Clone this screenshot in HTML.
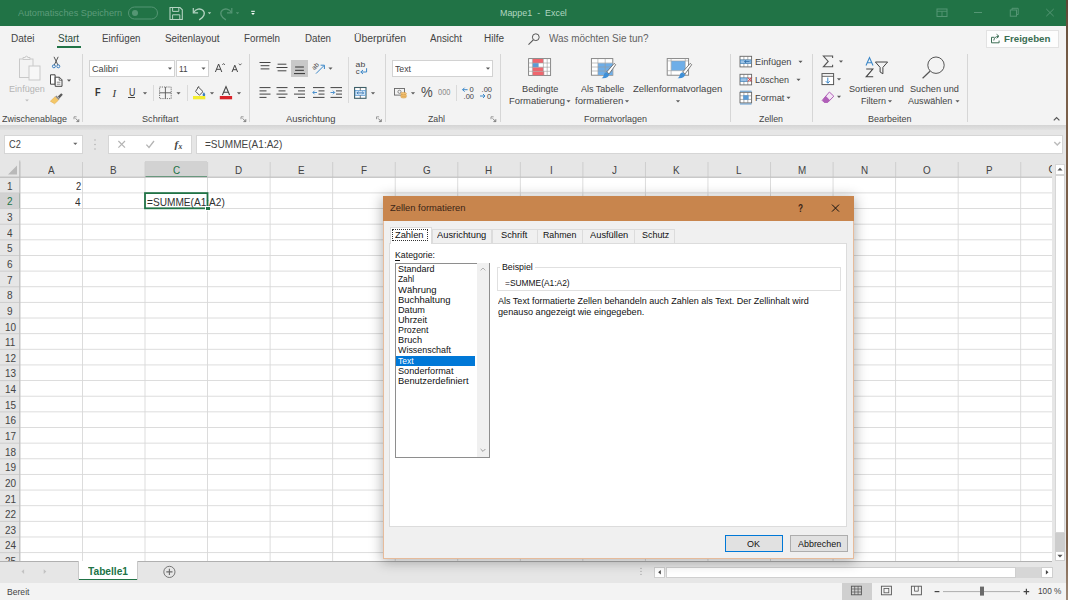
<!DOCTYPE html>
<html lang="de"><head><meta charset="utf-8"><title>Mappe1 - Excel</title>
<style>
html,body{margin:0;padding:0;}
body{width:1068px;height:600px;overflow:hidden;position:relative;background:#f3f3f3;font-family:"Liberation Sans",sans-serif;}
.r{position:absolute;}
.t{position:absolute;white-space:pre;transform-origin:0 50%;display:block;}
svg{position:absolute;left:0;top:0;overflow:visible;}
</style></head><body>
<div class="r " style="left:0.00px;top:0.00px;width:1068.00px;height:26.00px;background:#217346;"></div>
<span class="t" style="left:18.00px;top:7.17px;font-size:9.4px;line-height:11.28px;color:#5c9b7a;transform:scaleX(0.9804);">Automatisches Speichern</span>
<span class="t" style="left:499.50px;top:7.07px;font-size:9.4px;line-height:11.28px;color:#b0d6c0;transform:scaleX(0.9499);">Mappe1  -  Excel</span>
<div class="r " style="left:0.00px;top:26.00px;width:1068.00px;height:99.00px;background:#f3f3f3;"></div>
<span class="t" style="left:11.00px;top:32.60px;font-size:10px;line-height:12.00px;color:#444444;transform:scaleX(1.0066);">Datei</span>
<span class="t" style="left:58.00px;top:32.60px;font-size:10px;line-height:12.00px;color:#2b4b3a;transform:scaleX(0.9944);">Start</span>
<div class="r " style="left:57.00px;top:46.00px;width:23.50px;height:2.00px;background:#217346;"></div>
<span class="t" style="left:101.50px;top:32.60px;font-size:10px;line-height:12.00px;color:#444444;transform:scaleX(0.9752);">Einfügen</span>
<span class="t" style="left:165.00px;top:32.60px;font-size:10px;line-height:12.00px;color:#444444;transform:scaleX(0.9902);">Seitenlayout</span>
<span class="t" style="left:244.00px;top:32.60px;font-size:10px;line-height:12.00px;color:#444444;transform:scaleX(0.9816);">Formeln</span>
<span class="t" style="left:304.50px;top:32.60px;font-size:10px;line-height:12.00px;color:#444444;transform:scaleX(0.9743);">Daten</span>
<span class="t" style="left:353.50px;top:32.60px;font-size:10px;line-height:12.00px;color:#444444;transform:scaleX(1.0394);">Überprüfen</span>
<span class="t" style="left:429.50px;top:32.60px;font-size:10px;line-height:12.00px;color:#444444;transform:scaleX(0.9758);">Ansicht</span>
<span class="t" style="left:484.00px;top:32.60px;font-size:10px;line-height:12.00px;color:#444444;transform:scaleX(0.9997);">Hilfe</span>
<span class="t" style="left:548.50px;top:32.60px;font-size:10px;line-height:12.00px;color:#626262;transform:scaleX(0.9927);">Was möchten Sie tun?</span>
<div class="r " style="left:985.50px;top:30.00px;width:73.00px;height:17.50px;background:#fdfdfd;border:1px solid #e2e2e2;box-sizing:border-box;"></div>
<span class="t" style="left:1004.00px;top:32.95px;font-size:9.6px;line-height:11.52px;color:#3a6e52;transform:scaleX(1.0136);font-weight:bold;">Freigeben</span>
<div class="r " style="left:82.00px;top:53.50px;width:1.00px;height:68.50px;background:#d6d6d6;"></div>
<div class="r " style="left:249.00px;top:53.50px;width:1.00px;height:68.50px;background:#d6d6d6;"></div>
<div class="r " style="left:384.50px;top:53.50px;width:1.00px;height:68.50px;background:#d6d6d6;"></div>
<div class="r " style="left:499.50px;top:53.50px;width:1.00px;height:68.50px;background:#d6d6d6;"></div>
<div class="r " style="left:730.00px;top:53.50px;width:1.00px;height:68.50px;background:#d6d6d6;"></div>
<div class="r " style="left:812.00px;top:53.50px;width:1.00px;height:68.50px;background:#d6d6d6;"></div>
<div class="r " style="left:967.00px;top:53.50px;width:1.00px;height:68.50px;background:#d6d6d6;"></div>
<div class="r " style="left:348.00px;top:57.00px;width:1.00px;height:46.00px;background:#dadada;"></div>
<div class="r " style="left:153.00px;top:85.00px;width:1.00px;height:16.00px;background:#dadada;"></div>
<div class="r " style="left:187.00px;top:85.00px;width:1.00px;height:16.00px;background:#dadada;"></div>
<div class="r " style="left:456.00px;top:85.00px;width:1.00px;height:16.00px;background:#dadada;"></div>
<span class="t" style="left:2.00px;top:113.60px;font-size:9.2px;line-height:11.04px;color:#444444;transform:scaleX(0.9776);">Zwischenablage</span>
<span class="t" style="left:141.50px;top:113.60px;font-size:9.2px;line-height:11.04px;color:#444444;transform:scaleX(0.9916);">Schriftart</span>
<span class="t" style="left:286.00px;top:113.60px;font-size:9.2px;line-height:11.04px;color:#444444;transform:scaleX(1.0188);">Ausrichtung</span>
<span class="t" style="left:427.50px;top:113.60px;font-size:9.2px;line-height:11.04px;color:#444444;transform:scaleX(0.9498);">Zahl</span>
<span class="t" style="left:583.50px;top:113.60px;font-size:9.2px;line-height:11.04px;color:#444444;transform:scaleX(0.9778);">Formatvorlagen</span>
<span class="t" style="left:759.00px;top:113.60px;font-size:9.2px;line-height:11.04px;color:#444444;transform:scaleX(0.9578);">Zellen</span>
<span class="t" style="left:868.00px;top:113.60px;font-size:9.2px;line-height:11.04px;color:#444444;transform:scaleX(0.9775);">Bearbeiten</span>
<span class="t" style="left:9.00px;top:82.67px;font-size:9.4px;line-height:11.28px;color:#b5b5b5;transform:scaleX(0.9701);">Einfügen</span>
<div class="r " style="left:89.30px;top:59.50px;width:86.10px;height:17.50px;background:#fff;border:1px solid #d2d2d2;box-sizing:border-box;"></div>
<div class="r " style="left:176.20px;top:59.50px;width:33.00px;height:17.50px;background:#fff;border:1px solid #d2d2d2;box-sizing:border-box;"></div>
<span class="t" style="left:92.00px;top:62.67px;font-size:9.4px;line-height:11.28px;color:#444444;transform:scaleX(0.9759);">Calibri</span>
<span class="t" style="left:179.00px;top:62.67px;font-size:9.4px;line-height:11.28px;color:#444444;transform:scaleX(0.8813);">11</span>
<span class="t" style="left:94.80px;top:87.25px;font-size:10.4px;line-height:12.48px;color:#333;transform:scaleX(0.8815);font-weight:bold;">F</span>
<span class="t" style="left:112.6px;top:87px;font-size:10.8px;line-height:13px;color:#333;font-family:'Liberation Serif',serif;font-style:italic;">I</span>
<span class="t" style="left:128.60px;top:87.30px;font-size:10px;line-height:12.00px;color:#333;transform:scaleX(0.8862);">U</span>
<div class="r " style="left:128.40px;top:97.30px;width:6.80px;height:0.90px;background:#444;"></div>
<div class="r " style="left:291.00px;top:59.50px;width:16.50px;height:17.50px;background:#c8c8c8;"></div>
<div class="r " style="left:392.20px;top:59.50px;width:101.30px;height:17.50px;background:#fff;border:1px solid #d2d2d2;box-sizing:border-box;"></div>
<span class="t" style="left:395.00px;top:62.67px;font-size:9.4px;line-height:11.28px;color:#444444;transform:scaleX(0.9281);">Text</span>
<span class="t" style="left:420.90px;top:83.30px;font-size:15px;line-height:18.00px;color:#4a4a4a;transform:scaleX(0.8773);">%</span>
<span class="t" style="left:437.80px;top:88.32px;font-size:8.2px;line-height:9.84px;color:#8a8a8a;transform:scaleX(0.9063);">000</span>
<span class="t" style="left:521.50px;top:82.67px;font-size:9.4px;line-height:11.28px;color:#444444;transform:scaleX(0.9836);">Bedingte</span>
<span class="t" style="left:508.50px;top:95.17px;font-size:9.4px;line-height:11.28px;color:#444444;transform:scaleX(1.0018);">Formatierung</span>
<span class="t" style="left:580.50px;top:82.67px;font-size:9.4px;line-height:11.28px;color:#444444;transform:scaleX(0.9605);">Als Tabelle</span>
<span class="t" style="left:574.50px;top:95.17px;font-size:9.4px;line-height:11.28px;color:#444444;transform:scaleX(1.0201);">formatieren</span>
<span class="t" style="left:633.00px;top:82.67px;font-size:9.4px;line-height:11.28px;color:#444444;transform:scaleX(1.0136);">Zellenformatvorlagen</span>
<span class="t" style="left:754.50px;top:55.67px;font-size:9.4px;line-height:11.28px;color:#444444;transform:scaleX(0.9836);">Einfügen</span>
<span class="t" style="left:754.50px;top:73.67px;font-size:9.4px;line-height:11.28px;color:#444444;transform:scaleX(0.9567);">Löschen</span>
<span class="t" style="left:754.50px;top:91.67px;font-size:9.4px;line-height:11.28px;color:#444444;transform:scaleX(0.9909);">Format</span>
<span class="t" style="left:848.50px;top:82.67px;font-size:9.4px;line-height:11.28px;color:#444444;transform:scaleX(0.9745);">Sortieren und</span>
<span class="t" style="left:860.50px;top:95.17px;font-size:9.4px;line-height:11.28px;color:#444444;transform:scaleX(0.9572);">Filtern</span>
<span class="t" style="left:909.50px;top:82.67px;font-size:9.4px;line-height:11.28px;color:#444444;transform:scaleX(0.9765);">Suchen und</span>
<span class="t" style="left:908.00px;top:95.17px;font-size:9.4px;line-height:11.28px;color:#444444;transform:scaleX(0.9677);">Auswählen</span>
<div class="r " style="left:0.00px;top:125.00px;width:1068.00px;height:5.00px;background:linear-gradient(#d4d4d4,#e2e2e2);"></div>
<div class="r " style="left:0.00px;top:130.00px;width:1068.00px;height:30.50px;background:#e6e6e6;"></div>
<div class="r " style="left:4.30px;top:134.50px;width:79.10px;height:19.10px;background:#fff;border:1px solid #d6d6d6;box-sizing:border-box;"></div>
<span class="t" style="left:9.40px;top:139.15px;font-size:10.4px;line-height:12.48px;color:#444444;transform:scaleX(0.8876);">C2</span>
<div class="r " style="left:108.00px;top:134.50px;width:83.70px;height:19.10px;background:#fff;border:1px solid #d6d6d6;box-sizing:border-box;"></div>
<div class="r " style="left:196.00px;top:134.50px;width:867.00px;height:19.10px;background:#fff;border:1px solid #d6d6d6;box-sizing:border-box;"></div>
<span class="t" style="left:205.00px;top:139.08px;font-size:10.2px;line-height:12.24px;color:#444444;transform:scaleX(0.9859);">=SUMME(A1:A2)</span>
<div class="r " style="left:0.00px;top:160.50px;width:1068.00px;height:400.50px;background:#fff;"></div>
<div class="r " style="left:0.00px;top:160.50px;width:1052.00px;height:16.70px;background:#e6e6e6;"></div>
<div class="r " style="left:0.00px;top:160.50px;width:19.85px;height:400.50px;background:#e6e6e6;"></div>
<div class="r " style="left:144.95px;top:160.50px;width:62.55px;height:16.70px;background:#d2d2d2;"></div>
<div class="r " style="left:144.95px;top:176.00px;width:62.55px;height:1.20px;background:#217346;"></div>
<div class="r " style="left:0.00px;top:192.84px;width:19.85px;height:15.64px;background:#d2d2d2;"></div>
<div class="r " style="left:18.65px;top:192.84px;width:1.20px;height:15.64px;background:#217346;"></div>
<svg width="1068" height="600" viewBox="0 0 1068 600"><rect x="19.85" y="176.80" width="1032.15" height="0.9" fill="#d9d9d9"/><rect x="0" y="176.80" width="19.85" height="1" fill="#cecece"/><rect x="19.85" y="192.44" width="1032.15" height="0.9" fill="#d9d9d9"/><rect x="0" y="192.44" width="19.85" height="1" fill="#cecece"/><rect x="19.85" y="208.08" width="1032.15" height="0.9" fill="#d9d9d9"/><rect x="0" y="208.08" width="19.85" height="1" fill="#cecece"/><rect x="19.85" y="223.72" width="1032.15" height="0.9" fill="#d9d9d9"/><rect x="0" y="223.72" width="19.85" height="1" fill="#cecece"/><rect x="19.85" y="239.36" width="1032.15" height="0.9" fill="#d9d9d9"/><rect x="0" y="239.36" width="19.85" height="1" fill="#cecece"/><rect x="19.85" y="255.00" width="1032.15" height="0.9" fill="#d9d9d9"/><rect x="0" y="255.00" width="19.85" height="1" fill="#cecece"/><rect x="19.85" y="270.64" width="1032.15" height="0.9" fill="#d9d9d9"/><rect x="0" y="270.64" width="19.85" height="1" fill="#cecece"/><rect x="19.85" y="286.28" width="1032.15" height="0.9" fill="#d9d9d9"/><rect x="0" y="286.28" width="19.85" height="1" fill="#cecece"/><rect x="19.85" y="301.92" width="1032.15" height="0.9" fill="#d9d9d9"/><rect x="0" y="301.92" width="19.85" height="1" fill="#cecece"/><rect x="19.85" y="317.56" width="1032.15" height="0.9" fill="#d9d9d9"/><rect x="0" y="317.56" width="19.85" height="1" fill="#cecece"/><rect x="19.85" y="333.20" width="1032.15" height="0.9" fill="#d9d9d9"/><rect x="0" y="333.20" width="19.85" height="1" fill="#cecece"/><rect x="19.85" y="348.84" width="1032.15" height="0.9" fill="#d9d9d9"/><rect x="0" y="348.84" width="19.85" height="1" fill="#cecece"/><rect x="19.85" y="364.48" width="1032.15" height="0.9" fill="#d9d9d9"/><rect x="0" y="364.48" width="19.85" height="1" fill="#cecece"/><rect x="19.85" y="380.12" width="1032.15" height="0.9" fill="#d9d9d9"/><rect x="0" y="380.12" width="19.85" height="1" fill="#cecece"/><rect x="19.85" y="395.76" width="1032.15" height="0.9" fill="#d9d9d9"/><rect x="0" y="395.76" width="19.85" height="1" fill="#cecece"/><rect x="19.85" y="411.40" width="1032.15" height="0.9" fill="#d9d9d9"/><rect x="0" y="411.40" width="19.85" height="1" fill="#cecece"/><rect x="19.85" y="427.04" width="1032.15" height="0.9" fill="#d9d9d9"/><rect x="0" y="427.04" width="19.85" height="1" fill="#cecece"/><rect x="19.85" y="442.68" width="1032.15" height="0.9" fill="#d9d9d9"/><rect x="0" y="442.68" width="19.85" height="1" fill="#cecece"/><rect x="19.85" y="458.32" width="1032.15" height="0.9" fill="#d9d9d9"/><rect x="0" y="458.32" width="19.85" height="1" fill="#cecece"/><rect x="19.85" y="473.96" width="1032.15" height="0.9" fill="#d9d9d9"/><rect x="0" y="473.96" width="19.85" height="1" fill="#cecece"/><rect x="19.85" y="489.60" width="1032.15" height="0.9" fill="#d9d9d9"/><rect x="0" y="489.60" width="19.85" height="1" fill="#cecece"/><rect x="19.85" y="505.24" width="1032.15" height="0.9" fill="#d9d9d9"/><rect x="0" y="505.24" width="19.85" height="1" fill="#cecece"/><rect x="19.85" y="520.88" width="1032.15" height="0.9" fill="#d9d9d9"/><rect x="0" y="520.88" width="19.85" height="1" fill="#cecece"/><rect x="19.85" y="536.52" width="1032.15" height="0.9" fill="#d9d9d9"/><rect x="0" y="536.52" width="19.85" height="1" fill="#cecece"/><rect x="19.85" y="552.16" width="1032.15" height="0.9" fill="#d9d9d9"/><rect x="0" y="552.16" width="19.85" height="1" fill="#cecece"/><rect x="19.45" y="177.2" width="0.9" height="383.8" fill="#d9d9d9"/><rect x="19.45" y="162" width="1" height="15.199999999999989" fill="#cecece"/><rect x="82.00" y="177.2" width="0.9" height="383.8" fill="#d9d9d9"/><rect x="82.00" y="162" width="1" height="15.199999999999989" fill="#cecece"/><rect x="144.55" y="177.2" width="0.9" height="383.8" fill="#d9d9d9"/><rect x="144.55" y="162" width="1" height="15.199999999999989" fill="#cecece"/><rect x="207.10" y="177.2" width="0.9" height="383.8" fill="#d9d9d9"/><rect x="207.10" y="162" width="1" height="15.199999999999989" fill="#cecece"/><rect x="269.65" y="177.2" width="0.9" height="383.8" fill="#d9d9d9"/><rect x="269.65" y="162" width="1" height="15.199999999999989" fill="#cecece"/><rect x="332.20" y="177.2" width="0.9" height="383.8" fill="#d9d9d9"/><rect x="332.20" y="162" width="1" height="15.199999999999989" fill="#cecece"/><rect x="394.75" y="177.2" width="0.9" height="383.8" fill="#d9d9d9"/><rect x="394.75" y="162" width="1" height="15.199999999999989" fill="#cecece"/><rect x="457.30" y="177.2" width="0.9" height="383.8" fill="#d9d9d9"/><rect x="457.30" y="162" width="1" height="15.199999999999989" fill="#cecece"/><rect x="519.85" y="177.2" width="0.9" height="383.8" fill="#d9d9d9"/><rect x="519.85" y="162" width="1" height="15.199999999999989" fill="#cecece"/><rect x="582.40" y="177.2" width="0.9" height="383.8" fill="#d9d9d9"/><rect x="582.40" y="162" width="1" height="15.199999999999989" fill="#cecece"/><rect x="644.95" y="177.2" width="0.9" height="383.8" fill="#d9d9d9"/><rect x="644.95" y="162" width="1" height="15.199999999999989" fill="#cecece"/><rect x="707.50" y="177.2" width="0.9" height="383.8" fill="#d9d9d9"/><rect x="707.50" y="162" width="1" height="15.199999999999989" fill="#cecece"/><rect x="770.05" y="177.2" width="0.9" height="383.8" fill="#d9d9d9"/><rect x="770.05" y="162" width="1" height="15.199999999999989" fill="#cecece"/><rect x="832.60" y="177.2" width="0.9" height="383.8" fill="#d9d9d9"/><rect x="832.60" y="162" width="1" height="15.199999999999989" fill="#cecece"/><rect x="895.15" y="177.2" width="0.9" height="383.8" fill="#d9d9d9"/><rect x="895.15" y="162" width="1" height="15.199999999999989" fill="#cecece"/><rect x="957.70" y="177.2" width="0.9" height="383.8" fill="#d9d9d9"/><rect x="957.70" y="162" width="1" height="15.199999999999989" fill="#cecece"/><rect x="1020.25" y="177.2" width="0.9" height="383.8" fill="#d9d9d9"/><rect x="1020.25" y="162" width="1" height="15.199999999999989" fill="#cecece"/><rect x="0" y="176.7" width="1052" height="0.9" fill="#b8b8b8"/><rect x="19.35" y="160.5" width="0.9" height="400.5" fill="#b8b8b8"/></svg>
<span class="t" style="left:47.83px;top:164.55px;font-size:10.4px;line-height:12.48px;color:#444444;transform:scaleX(0.9500);">A</span>
<span class="t" style="left:110.38px;top:164.55px;font-size:10.4px;line-height:12.48px;color:#444444;transform:scaleX(0.9500);">B</span>
<span class="t" style="left:172.66px;top:164.55px;font-size:10.4px;line-height:12.48px;color:#217346;transform:scaleX(0.9500);">C</span>
<span class="t" style="left:235.21px;top:164.55px;font-size:10.4px;line-height:12.48px;color:#444444;transform:scaleX(0.9500);">D</span>
<span class="t" style="left:298.03px;top:164.55px;font-size:10.4px;line-height:12.48px;color:#444444;transform:scaleX(0.9500);">E</span>
<span class="t" style="left:360.86px;top:164.55px;font-size:10.4px;line-height:12.48px;color:#444444;transform:scaleX(0.9500);">F</span>
<span class="t" style="left:422.58px;top:164.55px;font-size:10.4px;line-height:12.48px;color:#444444;transform:scaleX(0.9500);">G</span>
<span class="t" style="left:485.41px;top:164.55px;font-size:10.4px;line-height:12.48px;color:#444444;transform:scaleX(0.9500);">H</span>
<span class="t" style="left:550.15px;top:164.55px;font-size:10.4px;line-height:12.48px;color:#444444;transform:scaleX(0.9500);">I</span>
<span class="t" style="left:611.61px;top:164.55px;font-size:10.4px;line-height:12.48px;color:#444444;transform:scaleX(0.9500);">J</span>
<span class="t" style="left:673.33px;top:164.55px;font-size:10.4px;line-height:12.48px;color:#444444;transform:scaleX(0.9500);">K</span>
<span class="t" style="left:736.43px;top:164.55px;font-size:10.4px;line-height:12.48px;color:#444444;transform:scaleX(0.9500);">L</span>
<span class="t" style="left:797.61px;top:164.55px;font-size:10.4px;line-height:12.48px;color:#444444;transform:scaleX(0.9500);">M</span>
<span class="t" style="left:860.71px;top:164.55px;font-size:10.4px;line-height:12.48px;color:#444444;transform:scaleX(0.9500);">N</span>
<span class="t" style="left:922.98px;top:164.55px;font-size:10.4px;line-height:12.48px;color:#444444;transform:scaleX(0.9500);">O</span>
<span class="t" style="left:986.08px;top:164.55px;font-size:10.4px;line-height:12.48px;color:#444444;transform:scaleX(0.9500);">P</span>
<div class="r" style="left:1040px;top:161px;width:12px;height:16px;overflow:hidden"><span class="t" style="left:8.6px;top:3px;font-size:10.4px;line-height:12.5px;color:#444">Q</span></div>
<span class="t" style="left:7.43px;top:179.75px;font-size:10.6px;line-height:12.72px;color:#444444;transform:scaleX(0.9400);">1</span>
<span class="t" style="left:7.43px;top:195.39px;font-size:10.6px;line-height:12.72px;color:#217346;transform:scaleX(0.9400);">2</span>
<span class="t" style="left:7.43px;top:211.03px;font-size:10.6px;line-height:12.72px;color:#444444;transform:scaleX(0.9400);">3</span>
<span class="t" style="left:7.43px;top:226.67px;font-size:10.6px;line-height:12.72px;color:#444444;transform:scaleX(0.9400);">4</span>
<span class="t" style="left:7.43px;top:242.31px;font-size:10.6px;line-height:12.72px;color:#444444;transform:scaleX(0.9400);">5</span>
<span class="t" style="left:7.43px;top:257.95px;font-size:10.6px;line-height:12.72px;color:#444444;transform:scaleX(0.9400);">6</span>
<span class="t" style="left:7.43px;top:273.59px;font-size:10.6px;line-height:12.72px;color:#444444;transform:scaleX(0.9400);">7</span>
<span class="t" style="left:7.43px;top:289.23px;font-size:10.6px;line-height:12.72px;color:#444444;transform:scaleX(0.9400);">8</span>
<span class="t" style="left:7.43px;top:304.87px;font-size:10.6px;line-height:12.72px;color:#444444;transform:scaleX(0.9400);">9</span>
<span class="t" style="left:4.66px;top:320.51px;font-size:10.6px;line-height:12.72px;color:#444444;transform:scaleX(0.9400);">10</span>
<span class="t" style="left:5.03px;top:336.15px;font-size:10.6px;line-height:12.72px;color:#444444;transform:scaleX(0.9400);">11</span>
<span class="t" style="left:4.66px;top:351.79px;font-size:10.6px;line-height:12.72px;color:#444444;transform:scaleX(0.9400);">12</span>
<span class="t" style="left:4.66px;top:367.43px;font-size:10.6px;line-height:12.72px;color:#444444;transform:scaleX(0.9400);">13</span>
<span class="t" style="left:4.66px;top:383.07px;font-size:10.6px;line-height:12.72px;color:#444444;transform:scaleX(0.9400);">14</span>
<span class="t" style="left:4.66px;top:398.71px;font-size:10.6px;line-height:12.72px;color:#444444;transform:scaleX(0.9400);">15</span>
<span class="t" style="left:4.66px;top:414.35px;font-size:10.6px;line-height:12.72px;color:#444444;transform:scaleX(0.9400);">16</span>
<span class="t" style="left:4.66px;top:429.99px;font-size:10.6px;line-height:12.72px;color:#444444;transform:scaleX(0.9400);">17</span>
<span class="t" style="left:4.66px;top:445.63px;font-size:10.6px;line-height:12.72px;color:#444444;transform:scaleX(0.9400);">18</span>
<span class="t" style="left:4.66px;top:461.27px;font-size:10.6px;line-height:12.72px;color:#444444;transform:scaleX(0.9400);">19</span>
<span class="t" style="left:4.66px;top:476.91px;font-size:10.6px;line-height:12.72px;color:#444444;transform:scaleX(0.9400);">20</span>
<span class="t" style="left:4.66px;top:492.55px;font-size:10.6px;line-height:12.72px;color:#444444;transform:scaleX(0.9400);">21</span>
<span class="t" style="left:4.66px;top:508.19px;font-size:10.6px;line-height:12.72px;color:#444444;transform:scaleX(0.9400);">22</span>
<span class="t" style="left:4.66px;top:523.83px;font-size:10.6px;line-height:12.72px;color:#444444;transform:scaleX(0.9400);">23</span>
<span class="t" style="left:4.66px;top:539.47px;font-size:10.6px;line-height:12.72px;color:#444444;transform:scaleX(0.9400);">24</span>
<span class="t" style="left:4.66px;top:555.11px;font-size:10.6px;line-height:12.72px;color:#444444;transform:scaleX(0.9400);">25</span>
<span class="t" style="left:75.50px;top:180.03px;font-size:10.6px;line-height:12.72px;color:#303030;transform:scaleX(0.8820);">2</span>
<span class="t" style="left:75.30px;top:195.63px;font-size:10.6px;line-height:12.72px;color:#303030;transform:scaleX(0.9499);">4</span>
<span class="t" style="left:146.80px;top:195.53px;font-size:10.6px;line-height:12.72px;color:#303030;transform:scaleX(0.9548);">=SUMME(A1:A2)</span>
<svg width="1068" height="600" viewBox="0 0 1068 600" fill="none"><rect x="145" y="193.1" width="62.5" height="15.2" stroke="#217346" stroke-width="1.8"/></svg>
<div class="r " style="left:205.30px;top:206.10px;width:4.70px;height:4.70px;background:#fff;"></div>
<div class="r " style="left:206.00px;top:206.80px;width:3.70px;height:3.70px;background:#217346;"></div>
<div class="r " style="left:1052.00px;top:160.50px;width:16.00px;height:400.50px;background:#e6e6e6;"></div>
<div class="r " style="left:1054.80px;top:163.60px;width:10.20px;height:11.60px;background:#fff;border:1px solid #d6d6d6;box-sizing:border-box;"></div>
<div class="r " style="left:1055.00px;top:175.20px;width:10.00px;height:357.80px;background:#fff;border:1px solid #d6d6d6;box-sizing:border-box;"></div>
<div class="r " style="left:1055.00px;top:533.00px;width:10.00px;height:18.00px;background:#cdcdcd;"></div>
<div class="r " style="left:1055.00px;top:551.00px;width:10.00px;height:10.00px;background:#fff;border:1px solid #cfcfcf;box-sizing:border-box;"></div>
<div class="r " style="left:0.00px;top:561.00px;width:1068.00px;height:22.00px;background:#e6e6e6;"></div>
<div class="r " style="left:0.00px;top:560.50px;width:1052.00px;height:1.00px;background:#b0b0b0;"></div>
<div class="r " style="left:78.20px;top:561.00px;width:59.80px;height:19.00px;background:#fff;border-left:1px solid #c9c9c9;border-right:1px solid #c9c9c9;box-sizing:border-box;"></div>
<div class="r " style="left:78.70px;top:578.60px;width:58.80px;height:1.60px;background:#217346;"></div>
<span class="t" style="left:88.00px;top:565.50px;font-size:10px;line-height:12.00px;color:#217346;transform:scaleX(1.0184);font-weight:bold;">Tabelle1</span>
<div class="r " style="left:0.00px;top:583.00px;width:1068.00px;height:17.00px;background:#f3f3f3;"></div>
<span class="t" style="left:6.70px;top:585.57px;font-size:9.4px;line-height:11.28px;color:#444444;transform:scaleX(0.9162);">Bereit</span>
<span class="t" style="left:1038.40px;top:585.32px;font-size:9.8px;line-height:11.76px;color:#444444;transform:scaleX(0.8421);">100 %</span>
<div class="r " style="left:654.00px;top:566.50px;width:11.00px;height:11.50px;background:#fff;border:1px solid #cfcfcf;box-sizing:border-box;"></div>
<div class="r " style="left:666.00px;top:566.50px;width:350.00px;height:11.50px;background:#fff;border:1px solid #cfcfcf;box-sizing:border-box;"></div>
<div class="r " style="left:1016.00px;top:566.50px;width:25.30px;height:11.50px;background:#d6d6d6;"></div>
<div class="r " style="left:1041.30px;top:566.50px;width:11.70px;height:11.50px;background:#fff;border:1px solid #cfcfcf;box-sizing:border-box;"></div>
<div class="r " style="left:842.00px;top:583.00px;width:30.00px;height:17.00px;background:#cfcfcf;"></div>
<div class="r " style="left:1065.80px;top:0.00px;width:2.20px;height:600.00px;background:linear-gradient(#5b4634 0%,#6b523e 5%,#7a5f49 12%,#7a5f49 90%,#a08a78 100%);"></div>
<svg width="1068" height="600" viewBox="0 0 1068 600" fill="none" stroke-linecap="butt"><rect x="128.5" y="7" width="29" height="12" rx="6" stroke="#559674" stroke-width="1"/><circle cx="135" cy="13" r="3" fill="#559674"/><path d="M170 7.5h10l2.3 2.3v9.7h-12.3z" stroke="#b4d3c2" stroke-width="1.1"/><path d="M172.6 7.6v3.8h6.2v-3.8M172.6 19.4v-4.6h7.2v4.6" stroke="#b4d3c2" stroke-width="1"/><path d="M193.3 8v4.8h4.8" stroke="#b4d3c2" stroke-width="1.2"/><path d="M193.6 12.5c2.2-3.6 6.6-4.6 9.2-2.2c2.8 2.6 1.6 6.6-3.6 9.6" stroke="#b4d3c2" stroke-width="1.3"/><path d="M207.80 12.25h3.4l-1.70 1.9z" fill="#b4d3c2"/><path d="M231.8 8v4.8h-4.8" stroke="#559674" stroke-width="1.2"/><path d="M231.5 12.5c-2.2-3.6-6.6-4.6-9.2-2.2c-2.8 2.6-1.6 6.6 3.6 9.6" stroke="#559674" stroke-width="1.3"/><path d="M235.80 12.25h3.4l-1.70 1.9z" fill="#559674"/><path d="M251.2 11.3H254.8" stroke="#fff" stroke-width="1"/><path d="M251.20 12.90h3.6l-1.80 2z" fill="#fff"/><rect x="937" y="9" width="10" height="7.5" stroke="#559674" stroke-width="1"/><path d="M937 11.3h10M942 11.3v5" stroke="#559674" stroke-width="0.9"/><path d="M974 12.5H982" stroke="#559674" stroke-width="1"/><rect x="1010.3" y="10" width="6.2" height="6.2" stroke="#559674" stroke-width="1"/><path d="M1012 10v-1.7h6.2v6.2h-1.7" stroke="#559674" stroke-width="1"/><path d="M1046.3 9l7.4 7.2M1053.7 9l-7.4 7.2" stroke="#559674" stroke-width="1"/><circle cx="535.8" cy="37.2" r="3.4" stroke="#555" stroke-width="1"/><path d="M533.3 39.8l-4.8 4.8" stroke="#555" stroke-width="1.1"/><path d="M994.5 37.3h-3v5.5h7.6v-2.2" stroke="#3c6e55" stroke-width="1"/><path d="M993.8 40.5c0.3-2.6 2-4 4.3-4.2M996.6 34.3l2.4 2l-2.4 2" stroke="#3c6e55" stroke-width="1"/><rect x="19.5" y="59" width="13.5" height="18.5" stroke="#c9c9c9" fill="#f3f3f3"/><path d="M23 59.5v-2h2.2a1.3 1.3 0 0 1 2.6 0h2.2v2z" stroke="#c9c9c9" fill="#f3f3f3"/><rect x="29" y="66" width="11" height="14" stroke="#c9c9c9" fill="#f7f7f7"/><path d="M25.20 99.60h3.6l-1.80 2z" fill="#bdbdbd"/><path d="M54 56.8l4 8.4M58.2 56.8l-4 8.4" stroke="#555" stroke-width="1"/><circle cx="53.9" cy="66.3" r="1.5" stroke="#3b7fc0" stroke-width="1"/><circle cx="58.3" cy="66.3" r="1.5" stroke="#3b7fc0" stroke-width="1"/><path d="M50.5 74.8h4.6v9.4h-4.6z" stroke="#444" stroke-width="1" fill="#fff"/><path d="M55.2 77.2h4.2l2.6 2.6v6.5h-6.8z" stroke="#444" stroke-width="1" fill="#fff"/><path d="M59.2 77.4v2.8h2.8" stroke="#444" stroke-width="0.8"/><path d="M56.8 82.2h3.6M56.8 84.2h3.6" stroke="#666" stroke-width="0.8"/><path d="M66.95 79.55h4.1l-2.05 2.3z" fill="#5a5a5a"/><path d="M61.2 93.2l1.6 1.6l-3.2 3.4l-1.8-1.8z" fill="#5a5a5a"/><path d="M56.4 95.4l3.4 3.4l-1.2 1.2l-3.4-3.4z" fill="#8a8a8a"/><path d="M55 96.8l3.4 3.4l-3.8 3.6l-4.2-2.6z" fill="#f3c768" stroke="#e0a43c" stroke-width="0.5"/><path d="M167.95 67.55h4.1l-2.05 2.3z" fill="#5a5a5a"/><path d="M201.45 67.55h4.1l-2.05 2.3z" fill="#5a5a5a"/><path d="M215.4 72l3.2-8l3.2 8M216.5 69.3h4.2" stroke="#444" stroke-width="1"/><path d="M222.3 65l1.3-1.5l1.3 1.5" stroke="#444" stroke-width="0.8"/><path d="M232 72l2.8-6.8l2.8 6.8M233 69.7h3.6" stroke="#444" stroke-width="1"/><path d="M238.9 63.6l1.3 1.5l1.3-1.5" stroke="#444" stroke-width="0.8"/><path d="M142.95 92.15h4.1l-2.05 2.3z" fill="#5a5a5a"/><rect x="159.6" y="87" width="11.6" height="11.6" stroke="#666" stroke-width="0.9" stroke-dasharray="1.2 1"/><path d="M165.4 87v11.6M159.6 92.8h11.6" stroke="#555" stroke-width="0.9"/><path d="M176.45 92.15h4.1l-2.05 2.3z" fill="#5a5a5a"/><path d="M198.4 87l4.6 4.6l-3.6 3.6l-3.8-3.8z" stroke="#555" stroke-width="1" fill="#f8f8f8"/><path d="M197.6 87.8l1.4-1.6" stroke="#555" stroke-width="0.9"/><path d="M203.9 92.3c0.9 1.3 1.3 2 1.3 2.6a1.3 1.3 0 0 1-2.6 0c0-0.6 0.4-1.3 1.3-2.6z" fill="#3b7fc0"/><rect x="193" y="96" width="12.3" height="3.3" fill="#f4ee2e"/><path d="M209.95 92.15h4.1l-2.05 2.3z" fill="#5a5a5a"/><path d="M222.4 95l3.6-8.4l3.6 8.4M223.7 92.2h4.6" stroke="#444" stroke-width="1.1"/><rect x="219.8" y="96" width="12.3" height="3.3" fill="#d8232a"/><path d="M236.95 92.15h4.1l-2.05 2.3z" fill="#5a5a5a"/><path d="M259.5 62.5H270.5" stroke="#444" stroke-width="1"/><path d="M260.6 65.7H269.4" stroke="#444" stroke-width="1"/><path d="M260.6 68.9H269.4" stroke="#444" stroke-width="1"/><path d="M277.6 64.2H286.4" stroke="#444" stroke-width="1"/><path d="M276.5 67.5H287.5" stroke="#444" stroke-width="1"/><path d="M277.6 70.8H286.4" stroke="#444" stroke-width="1"/><path d="M295.1 67H303.9" stroke="#333" stroke-width="1"/><path d="M295.1 70.3H303.9" stroke="#333" stroke-width="1"/><path d="M294 73.6H305" stroke="#333" stroke-width="1"/><g transform="translate(314.2 70.4) rotate(-45)"><text x="0" y="0" font-family="Liberation Sans" font-size="6.6" fill="#444" stroke="none">ab</text></g><path d="M316 73.6l8-8M320.6 65.2h3.8v3.8" stroke="#3b87c8" stroke-width="1"/><path d="M328.45 67.55h4.1l-2.05 2.3z" fill="#5a5a5a"/><text x="355.6" y="67.4" font-family="Liberation Sans" font-size="7.8" textLength="9.6" lengthAdjust="spacingAndGlyphs" fill="#444" stroke="none">ab</text><text x="355.8" y="74.4" font-family="Liberation Sans" font-size="7.8" fill="#444" stroke="none">c</text><path d="M366.6 68.2v3.8h-5.8M363 70l-2.2 2l2.2 2" stroke="#3b87c8" stroke-width="1"/><path d="M259.5 87.6H270.5" stroke="#444" stroke-width="1"/><path d="M259.5 90.9H266.5" stroke="#444" stroke-width="1"/><path d="M259.5 94.1H270.5" stroke="#444" stroke-width="1"/><path d="M259.5 97.4H266.5" stroke="#444" stroke-width="1"/><path d="M276.5 87.6H287.5" stroke="#444" stroke-width="1"/><path d="M278.5 90.9H285.5" stroke="#444" stroke-width="1"/><path d="M276.5 94.1H287.5" stroke="#444" stroke-width="1"/><path d="M278.5 97.4H285.5" stroke="#444" stroke-width="1"/><path d="M294 87.6H305" stroke="#444" stroke-width="1"/><path d="M298 90.9H305" stroke="#444" stroke-width="1"/><path d="M294 94.1H305" stroke="#444" stroke-width="1"/><path d="M298 97.4H305" stroke="#444" stroke-width="1"/><path d="M313 87.6H324.5" stroke="#444" stroke-width="1"/><path d="M318.5 90.9H324.5" stroke="#444" stroke-width="1"/><path d="M318.5 94.1H324.5" stroke="#444" stroke-width="1"/><path d="M313 97.4H324.5" stroke="#444" stroke-width="1"/><path d="M317 92.5h-4M314.6 90.7l-1.8 1.8l1.8 1.8" stroke="#3b87c8" stroke-width="0.9"/><path d="M330.5 87.6H342" stroke="#444" stroke-width="1"/><path d="M336 90.9H342" stroke="#444" stroke-width="1"/><path d="M336 94.1H342" stroke="#444" stroke-width="1"/><path d="M330.5 97.4H342" stroke="#444" stroke-width="1"/><path d="M330.5 92.5h4M332.9 90.7l1.8 1.8l-1.8 1.8" stroke="#3b87c8" stroke-width="0.9"/><rect x="354.6" y="87.5" width="11.4" height="10.8" stroke="#3d5f68" stroke-width="1.1" fill="#fff"/><rect x="355.1" y="90.4" width="10.4" height="5" fill="#cfe3f5" stroke="#3b87c8" stroke-width="0.6"/><path d="M357 92.9h6.6M358.4 91.5l-1.4 1.4l1.4 1.4M362.2 91.5l1.4 1.4l-1.4 1.4" stroke="#2d6fae" stroke-width="0.8"/><path d="M360.3 87.5v3M360.3 95.4v3" stroke="#555" stroke-width="0.8"/><path d="M370.95 92.15h4.1l-2.05 2.3z" fill="#5a5a5a"/><path d="M485.95 67.55h4.1l-2.05 2.3z" fill="#5a5a5a"/><rect x="394.5" y="88.5" width="10" height="6.6" stroke="#666" stroke-width="0.9" fill="#f3f3f3"/><circle cx="399.5" cy="91.8" r="1.6" stroke="#666" stroke-width="0.7"/><ellipse cx="403.6" cy="96.8" rx="2.9" ry="1.2" fill="#f0c27a" stroke="#d99a3a" stroke-width="0.6"/><ellipse cx="403.6" cy="95.2" rx="2.9" ry="1.2" fill="#f0c27a" stroke="#d99a3a" stroke-width="0.6"/><ellipse cx="403.6" cy="93.6" rx="2.9" ry="1.2" fill="#f0c27a" stroke="#d99a3a" stroke-width="0.6"/><path d="M410.95 92.15h4.1l-2.05 2.3z" fill="#5a5a5a"/><path d="M467.6 89.7h-5M464.6 87.7l-2 2l2 2" stroke="#3b87c8" stroke-width="1"/><text x="469.4" y="92.4" font-family="Liberation Sans" font-size="7.4" fill="#444" stroke="none" textLength="4.2" lengthAdjust="spacingAndGlyphs">0</text><text x="463.6" y="98.6" font-family="Liberation Sans" font-size="7.4" fill="#444" stroke="none" textLength="10.4" lengthAdjust="spacingAndGlyphs">.00</text><text x="481.6" y="92.4" font-family="Liberation Sans" font-size="7.4" fill="#444" stroke="none" textLength="10.4" lengthAdjust="spacingAndGlyphs">.00</text><path d="M480 96h5M483 94l2 2l-2 2" stroke="#3b87c8" stroke-width="1"/><text x="487" y="98.6" font-family="Liberation Sans" font-size="7.4" fill="#444" stroke="none" textLength="4.2" lengthAdjust="spacingAndGlyphs">0</text><rect x="528.6" y="58.6" width="22" height="16.8" fill="#fff" stroke="#7d7d7d" stroke-width="0.9"/><rect x="532.6" y="59" width="10.6" height="4" fill="#f0656d"/><rect x="532.6" y="67.3" width="10.6" height="4" fill="#f0656d"/><rect x="532.6" y="71.4" width="11.6" height="3.8" fill="#f0656d"/><rect x="532.6" y="63.1" width="6" height="4.1" fill="#5b9bd5"/><path d="M532.4 58.6v16.8M543.4 58.6v16.8M547.2 58.6v16.8M528.6 63h22M528.6 67.2h22M528.6 71.3h22" stroke="#9a9a9a" stroke-width="0.6"/><path d="M566.45 100.15h4.1l-2.05 2.3z" fill="#5a5a5a"/><rect x="591.4" y="58.6" width="21.4" height="16.6" fill="#fff" stroke="#7d7d7d" stroke-width="0.9"/><rect x="598" y="63.2" width="14.6" height="11.8" fill="#6eaee8"/><path d="M597.9 58.6v16.6M605.2 58.6v16.6M591.4 63h21.4M591.4 67h21.4M591.4 71h21.4" stroke="#9a9a9a" stroke-width="0.6"/><path d="M614.2 63.4l1.5 1.3l-6.6 9.2l-2.4-1.9z" fill="#fff" stroke="#5f5f5f" stroke-width="0.8"/><path d="M606.4 72.2l2.8 2.2c-0.5 2.6-3.2 4.4-7.6 3.8c1.7-0.8 1.8-1.9 2.2-3.2c0.4-1.4 1.2-2.3 2.6-2.8z" fill="#3f8fd6"/><path d="M624.95 100.15h4.1l-2.05 2.3z" fill="#5a5a5a"/><rect x="667.2" y="58.6" width="21.4" height="16.6" fill="#fff" stroke="#7d7d7d" stroke-width="0.9"/><rect x="671.2" y="61" width="14" height="9.6" fill="#6eaee8"/><path d="M671.1 58.6v16.6M685.3 58.6v16.6M667.2 60.9h21.4M667.2 70.7h21.4" stroke="#9a9a9a" stroke-width="0.6"/><path d="M690.2 63.4l1.5 1.3l-6.6 9.2l-2.4-1.9z" fill="#fff" stroke="#5f5f5f" stroke-width="0.8"/><path d="M682.4 72.2l2.8 2.2c-0.5 2.6-3.2 4.4-7.6 3.8c1.7-0.8 1.8-1.9 2.2-3.2c0.4-1.4 1.2-2.3 2.6-2.8z" fill="#3f8fd6"/><path d="M675.95 100.15h4.1l-2.05 2.3z" fill="#5a5a5a"/><rect x="740" y="56.3" width="11.6" height="10.6" fill="#fff" stroke="#666" stroke-width="0.9"/><path d="M743.9 56.3v10.6M747.8 56.3v10.6M740 59.8h11.6M740 63.4h11.6" stroke="#777" stroke-width="0.6"/><rect x="740.6" y="60.0" width="10.4" height="3.3" fill="#9cc3e6" stroke="#3b87c8" stroke-width="0.6"/><path d="M749.6 61.599999999999994h-5M746.2 60.199999999999996l-1.6 1.4l1.6 1.4" stroke="#1f5f9e" stroke-width="0.8"/><rect x="740" y="74.3" width="11.6" height="10.6" fill="#fff" stroke="#666" stroke-width="0.9"/><path d="M743.9 74.3v10.6M747.8 74.3v10.6M740 77.8h11.6M740 81.39999999999999h11.6" stroke="#777" stroke-width="0.6"/><rect x="740.6" y="78.0" width="6.4" height="3.3" fill="#9cc3e6" stroke="#3b87c8" stroke-width="0.6"/><path d="M748 77.6l3.6 3.8M751.6 77.6l-3.6 3.8" stroke="#d9232e" stroke-width="1"/><rect x="740" y="92.3" width="11.6" height="10.6" fill="#fff" stroke="#666" stroke-width="0.9"/><path d="M743.9 92.3v10.6M747.8 92.3v10.6M740 95.8h11.6M740 99.39999999999999h11.6" stroke="#777" stroke-width="0.6"/><rect x="743.2" y="95.2" width="5.4" height="4.6" fill="#5b9bd5"/><path d="M740 91.2h11.6M740 104.0h11.6" stroke="#3b87c8" stroke-width="0.8"/><path d="M798.45 60.65h4.1l-2.05 2.3z" fill="#5a5a5a"/><path d="M796.45 78.65h4.1l-2.05 2.3z" fill="#5a5a5a"/><path d="M786.45 96.65h4.1l-2.05 2.3z" fill="#5a5a5a"/><path d="M832.6 58v-2h-9.2l4.8 5.4l-4.8 5.4h9.2v-2" stroke="#555" stroke-width="1.1"/><path d="M838.95 60.45h4.1l-2.05 2.3z" fill="#5a5a5a"/><rect x="822" y="73.6" width="11.6" height="11" stroke="#555" stroke-width="1" fill="#fff"/><path d="M822 76.3h11.6" stroke="#555" stroke-width="0.9"/><path d="M827.8 77.6v5.6M825.8 81.2l2 2l2-2" stroke="#3b87c8" stroke-width="1"/><path d="M836.95 78.25h4.1l-2.05 2.3z" fill="#5a5a5a"/><path d="M829.4 92l4.4 4.2l-6 6.2h-3.6l-2-2z" fill="#f4e6f5" stroke="#b05fb8" stroke-width="1"/><path d="M825.6 95.8l4.4 4.4l-2.4 2.4h-3.2l-2-2z" fill="#b05fb8"/><path d="M836.95 95.65h4.1l-2.05 2.3z" fill="#5a5a5a"/><path d="M866 65.4l3.5-7.8l3.5 7.8M867.3 62.8h4.4" stroke="#3b87c8" stroke-width="1.1"/><path d="M866.2 69h6.6l-6.6 7.8h7" stroke="#444" stroke-width="1.1"/><path d="M875.4 62h12.2l-4.7 5.4v6.4l-2.8-1.8v-4.6z" stroke="#444" stroke-width="1"/><path d="M887.95 100.15h4.1l-2.05 2.3z" fill="#5a5a5a"/><circle cx="936" cy="65.2" r="8.2" stroke="#555" stroke-width="1"/><path d="M930 71.2l-7.4 7" stroke="#555" stroke-width="1.2"/><path d="M955.45 100.15h4.1l-2.05 2.3z" fill="#5a5a5a"/><path d="M1053.8 120.4l2.8-2.8l2.8 2.8" stroke="#555" stroke-width="1.2"/><path d="M74 119.2v-2.4h2.6" stroke="#777" stroke-width="0.7"/><path d="M75.6 118.4l3 3M78.8 119.2v2.4h-2.4" stroke="#666" stroke-width="0.8"/><path d="M241 119.2v-2.4h2.6" stroke="#777" stroke-width="0.7"/><path d="M242.6 118.4l3 3M245.8 119.2v2.4h-2.4" stroke="#666" stroke-width="0.8"/><path d="M376.5 119.2v-2.4h2.6" stroke="#777" stroke-width="0.7"/><path d="M378.1 118.4l3 3M381.3 119.2v2.4h-2.4" stroke="#666" stroke-width="0.8"/><path d="M491 119.2v-2.4h2.6" stroke="#777" stroke-width="0.7"/><path d="M492.6 118.4l3 3M495.8 119.2v2.4h-2.4" stroke="#666" stroke-width="0.8"/><path d="M73.20 142.65h4.2l-2.10 2.3z" fill="#666"/><circle cx="95" cy="140" r="0.7" fill="#a8a8a8"/><circle cx="95" cy="144.5" r="0.7" fill="#a8a8a8"/><circle cx="95" cy="149" r="0.7" fill="#a8a8a8"/><path d="M118.4 141l6.6 6.6M125 141l-6.6 6.6" stroke="#b4b4b4" stroke-width="1.2"/><path d="M146.4 144.6l2.6 2.8l5-6.4" stroke="#b4b4b4" stroke-width="1.3"/><text x="174.4" y="148" font-family="Liberation Serif" font-style="italic" font-size="11" font-weight="bold" fill="#444" stroke="none">f</text><text x="178.4" y="148.6" font-family="Liberation Serif" font-style="italic" font-weight="bold" font-size="7.6" fill="#444" stroke="none">x</text><path d="M1054.3 142l3 3l3-3" stroke="#bcbcbc" stroke-width="1.5"/><path d="M17 165.6v9h-9z" fill="#b9b9b9"/><path d="M1057.4 170.6h5.2l-2.6-2.8z" fill="#555"/><path d="M1057.4 554.8h5.2l-2.6 2.8z" fill="#555"/><path d="M24.10 569.30v4.6l-2.6 -2.3z" fill="#c2c2c2"/><path d="M43.70 569.30v4.6l2.6 -2.3z" fill="#c2c2c2"/><circle cx="169.4" cy="571.9" r="5.6" stroke="#6a6a6a" stroke-width="0.9"/><path d="M166.3 571.9h6.2M169.4 568.8v6.2" stroke="#6a6a6a" stroke-width="1.1"/><circle cx="641" cy="568.3" r="0.65" fill="#9a9a9a"/><circle cx="641" cy="571.3" r="0.65" fill="#9a9a9a"/><circle cx="641" cy="574.3" r="0.65" fill="#9a9a9a"/><path d="M660.80 569.90v4.6l-2.6 -2.3z" fill="#444"/><path d="M1045.90 569.90v4.6l2.6 -2.3z" fill="#444"/><rect x="851.4" y="586.2" width="10" height="8.6" stroke="#555" stroke-width="0.9"/><path d="M854.7 586.2v8.6M858.1 586.2v8.6M851.4 589h10M851.4 592h10" stroke="#555" stroke-width="0.7"/><rect x="881.4" y="586.2" width="10" height="8.6" stroke="#555" stroke-width="0.9"/><rect x="884" y="588.4" width="4.8" height="4.4" stroke="#555" stroke-width="0.8"/><rect x="911.4" y="586.2" width="10" height="8.6" stroke="#555" stroke-width="0.9"/><path d="M914.5 586.2v5h3.8v-5" stroke="#555" stroke-width="0.8"/><path d="M934.6 591.6H939.4" stroke="#444" stroke-width="1.2"/><path d="M943 591.6H1020" stroke="#9a9a9a" stroke-width="0.8"/><rect x="980" y="586.6" width="4" height="9" fill="#6a6a6a"/><path d="M1023.6 591.6h5.6M1026.4 588.8v5.6" stroke="#444" stroke-width="1.2"/></svg>
<div class="r " style="left:383.20px;top:195.50px;width:471.00px;height:363.30px;background:#f0f0f0;box-shadow:0 2px 12px 1px rgba(0,0,0,0.30);outline:1px solid #e6bb9b;outline-offset:-1px;"></div>
<div class="r " style="left:383.20px;top:195.50px;width:471.00px;height:25.30px;background:#c8854d;"></div>
<span class="t" style="left:389.70px;top:202.47px;font-size:9.4px;line-height:11.28px;color:#3a2416;transform:scaleX(0.9992);">Zellen formatieren</span>
<span class="t" style="left:798.20px;top:201.90px;font-size:10.8px;line-height:12.96px;color:#3a2416;transform:scaleX(0.7579);font-weight:bold;">?</span>
<div class="r " style="left:388.80px;top:242.70px;width:458.70px;height:284.30px;background:#fff;border:1px solid #dcdcdc;box-sizing:border-box;"></div>
<div class="r " style="left:431.50px;top:228.70px;width:60.80px;height:14.50px;background:#f0f0f0;border:1px solid #dcdcdc;box-sizing:border-box;border-bottom:none;"></div>
<span class="t" style="left:437.00px;top:230.14px;font-size:8.8px;line-height:10.56px;color:#111;transform:scaleX(1.0608);">Ausrichtung</span>
<div class="r " style="left:491.50px;top:228.70px;width:46.30px;height:14.50px;background:#f0f0f0;border:1px solid #dcdcdc;box-sizing:border-box;border-bottom:none;"></div>
<span class="t" style="left:501.00px;top:230.14px;font-size:8.8px;line-height:10.56px;color:#111;transform:scaleX(1.0545);">Schrift</span>
<div class="r " style="left:537.00px;top:228.70px;width:45.80px;height:14.50px;background:#f0f0f0;border:1px solid #dcdcdc;box-sizing:border-box;border-bottom:none;"></div>
<span class="t" style="left:543.00px;top:230.14px;font-size:8.8px;line-height:10.56px;color:#111;transform:scaleX(1.0011);">Rahmen</span>
<div class="r " style="left:582.00px;top:228.70px;width:52.80px;height:14.50px;background:#f0f0f0;border:1px solid #dcdcdc;box-sizing:border-box;border-bottom:none;"></div>
<span class="t" style="left:590.00px;top:230.14px;font-size:8.8px;line-height:10.56px;color:#111;transform:scaleX(1.0579);">Ausfüllen</span>
<div class="r " style="left:634.00px;top:228.70px;width:41.30px;height:14.50px;background:#f0f0f0;border:1px solid #dcdcdc;box-sizing:border-box;border-bottom:none;"></div>
<span class="t" style="left:642.00px;top:230.14px;font-size:8.8px;line-height:10.56px;color:#111;transform:scaleX(1.0147);">Schutz</span>
<div class="r " style="left:389.50px;top:226.70px;width:42.00px;height:17.10px;background:#fff;border:1px solid #dcdcdc;box-sizing:border-box;border-bottom:none;"></div>
<div class="r " style="left:391.80px;top:229.20px;width:36.70px;height:12.30px;border:1px dotted #333;box-sizing:border-box;"></div>
<span class="t" style="left:395.00px;top:229.94px;font-size:8.8px;line-height:10.56px;color:#111;transform:scaleX(1.0592);">Zahlen</span>
<span class="t" style="left:395.00px;top:250.14px;font-size:8.8px;line-height:10.56px;color:#111;transform:scaleX(0.9971);">Kategorie:</span>
<div class="r " style="left:395.00px;top:260.00px;width:4.80px;height:0.70px;background:#111;"></div>
<div class="r " style="left:395.00px;top:262.50px;width:94.70px;height:195.80px;background:#fff;border:1px solid #8e8e8e;box-sizing:border-box;"></div>
<div class="r " style="left:476.80px;top:263.30px;width:12.10px;height:194.20px;background:#f0f0f0;"></div>
<span class="t" style="left:398.00px;top:264.34px;font-size:8.8px;line-height:10.56px;color:#111;transform:scaleX(1.0219);">Standard</span>
<span class="t" style="left:398.00px;top:274.47px;font-size:8.8px;line-height:10.56px;color:#111;transform:scaleX(0.9463);">Zahl</span>
<span class="t" style="left:398.00px;top:284.60px;font-size:8.8px;line-height:10.56px;color:#111;transform:scaleX(1.0782);">Währung</span>
<span class="t" style="left:398.00px;top:294.73px;font-size:8.8px;line-height:10.56px;color:#111;transform:scaleX(1.0730);">Buchhaltung</span>
<span class="t" style="left:398.00px;top:304.86px;font-size:8.8px;line-height:10.56px;color:#111;transform:scaleX(1.0417);">Datum</span>
<span class="t" style="left:398.00px;top:314.99px;font-size:8.8px;line-height:10.56px;color:#111;transform:scaleX(1.0404);">Uhrzeit</span>
<span class="t" style="left:398.00px;top:325.12px;font-size:8.8px;line-height:10.56px;color:#111;transform:scaleX(1.0057);">Prozent</span>
<span class="t" style="left:398.00px;top:335.25px;font-size:8.8px;line-height:10.56px;color:#111;transform:scaleX(1.0440);">Bruch</span>
<span class="t" style="left:398.00px;top:345.38px;font-size:8.8px;line-height:10.56px;color:#111;transform:scaleX(1.0128);">Wissenschaft</span>
<div class="r " style="left:396.00px;top:355.97px;width:79.20px;height:9.80px;background:#0078d7;"></div>
<span class="t" style="left:398.00px;top:355.51px;font-size:8.8px;line-height:10.56px;color:#fff;transform:scaleX(0.9604);">Text</span>
<span class="t" style="left:398.00px;top:365.64px;font-size:8.8px;line-height:10.56px;color:#111;transform:scaleX(1.0409);">Sonderformat</span>
<span class="t" style="left:398.00px;top:375.77px;font-size:8.8px;line-height:10.56px;color:#111;transform:scaleX(1.0597);">Benutzerdefiniert</span>
<div class="r " style="left:497.00px;top:267.00px;width:344.00px;height:24.40px;border:1px solid #e0e0e0;box-sizing:border-box;"></div>
<div class="r " style="left:500.00px;top:262.00px;width:35.00px;height:10.00px;background:#fff;"></div>
<span class="t" style="left:502.00px;top:261.54px;font-size:8.8px;line-height:10.56px;color:#111;transform:scaleX(0.9994);">Beispiel</span>
<span class="t" style="left:504.80px;top:278.27px;font-size:8.6px;line-height:10.32px;color:#111;transform:scaleX(0.9775);">=SUMME(A1:A2)</span>
<span class="t" style="left:497.50px;top:296.04px;font-size:8.8px;line-height:10.56px;color:#111;transform:scaleX(1.0249);">Als Text formatierte Zellen behandeln auch Zahlen als Text. Der Zellinhalt wird</span>
<span class="t" style="left:497.50px;top:306.54px;font-size:8.8px;line-height:10.56px;color:#111;transform:scaleX(1.0382);">genauso angezeigt wie eingegeben.</span>
<div class="r " style="left:725.00px;top:535.40px;width:57.50px;height:16.20px;background:#e1e1e1;border:1.7px solid #0078d7;box-sizing:border-box;"></div>
<span class="t" style="left:747.00px;top:538.92px;font-size:9px;line-height:10.80px;color:#111;transform:scaleX(0.9997);">OK</span>
<div class="r " style="left:790.40px;top:535.40px;width:57.30px;height:16.20px;background:#e1e1e1;border:1px solid #adadad;box-sizing:border-box;"></div>
<span class="t" style="left:797.80px;top:538.62px;font-size:9px;line-height:10.80px;color:#111;transform:scaleX(0.9923);">Abbrechen</span>
<svg width="1068" height="600" viewBox="0 0 1068 600" fill="none"><path d="M832 204.6l7 7M839 204.6l-7 7" stroke="#111" stroke-width="1"/><path d="M480.6 270.4l2.4-2.4l2.4 2.4" stroke="#b0b0b0" stroke-width="1"/><path d="M480.6 449l2.4 2.4l2.4-2.4" stroke="#9a9a9a" stroke-width="1"/></svg>
</body></html>
